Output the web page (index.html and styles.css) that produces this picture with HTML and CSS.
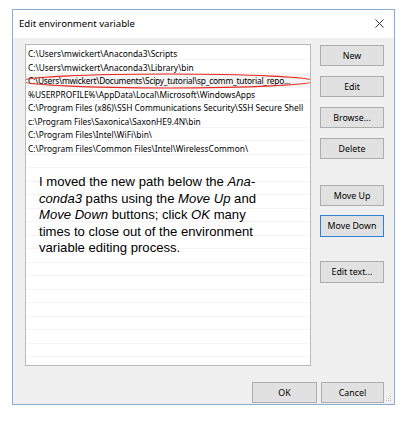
FILE: index.html
```html
<!DOCTYPE html>
<html>
<head>
<meta charset="utf-8">
<link rel="stylesheet" href="styles.css">
</head>
<body>
<div class="dialog">
  <div class="titlebar">
    <span class="title">Edit environment variable</span>
    <svg class="close" width="9" height="9" viewBox="0 0 9 9"><path d="M0.5 0.5 L8.5 8.5 M8.5 0.5 L0.5 8.5" stroke="#333" stroke-width="1" fill="none"/></svg>
  </div>
  <div class="client">
    <div class="content">
      <div class="listbox">
        <div class="row">C:\Users\mwickert\Anaconda3\Scripts</div>
        <div class="row">C:\Users\mwickert\Anaconda3\Library\bin</div>
        <div class="row sel">C:\Users\mwickert\Documents\Scipy_tutorial\sp_comm_tutorial_repo...</div>
        <div class="row">%USERPROFILE%\AppData\Local\Microsoft\WindowsApps</div>
        <div class="row">C:\Program Files (x86)\SSH Communications Security\SSH Secure Shell</div>
        <div class="row">c:\Program Files\Saxonica\SaxonHE9.4N\bin</div>
        <div class="row">C:\Program Files\Intel\WiFi\bin\</div>
        <div class="row">C:\Program Files\Common Files\Intel\WirelessCommon\</div>
        <svg class="ellipse" width="300" height="18" viewBox="0 0 300 18"><ellipse cx="149" cy="9" rx="146" ry="7" stroke="#e8281e" stroke-width="1.2" fill="none"/></svg>
        <p class="note">I moved the new path below the <i>Ana-<br>conda3</i> paths using the <i>Move Up</i> and<br><i>Move Down</i> buttons; click <i>OK</i> many<br>times to close out of the environment<br>variable editing process.</p>
      </div>
      <div class="buttons">
        <button class="btn">New</button>
        <button class="btn">Edit</button>
        <button class="btn">Browse...</button>
        <button class="btn">Delete</button>
        <button class="btn gap">Move Up</button>
        <button class="btn focus">Move Down</button>
        <button class="btn gap2">Edit text...</button>
      </div>
    </div>
    <div class="footer">
      <button class="btn wide">OK</button>
      <button class="btn wide">Cancel</button>
    </div>
    <svg class="grip" width="6" height="6" viewBox="0 0 6 6"><rect x="4" y="0" width="1" height="1" fill="#bbb"/><rect x="2" y="2" width="1" height="1" fill="#bbb"/><rect x="4" y="2" width="1" height="1" fill="#bbb"/><rect x="0" y="4" width="1" height="1" fill="#bbb"/><rect x="2" y="4" width="1" height="1" fill="#bbb"/><rect x="4" y="4" width="1" height="1" fill="#bbb"/></svg>
  </div>
</div>
</body>
</html>
```
FILE: styles.css
```css
html, body {
  margin: 0;
  padding: 0;
  background: #ffffff;
}
body {
  padding: 9px 0 0 12px;
  font-family: "Noto Sans", "Open Sans", sans-serif;
}
.dialog {
  width: 381px;
  height: 394px;
  border: 1px solid #8caad6;
  display: flex;
  flex-direction: column;
  background: #f0f0f0;
}
.titlebar {
  height: 28px;
  background: #ffffff;
  display: flex;
  align-items: center;
  justify-content: space-between;
  padding: 0 8px 0 6px;
}
.title {
  font-size: 9.6px;
  color: #000;
  margin-top: -2px;
}
.close {
  margin-top: -1px;
  margin-right: 2px;
}
.client {
  position: relative;
  flex: 1;
  display: flex;
  flex-direction: column;
}
.content {
  display: flex;
  padding: 6px 0 0 12px;
}
.listbox {
  position: relative;
  width: 284px;
  height: 318px;
  border: 1px solid #b9b9b9;
  background-color: #ffffff;
  background-image: repeating-linear-gradient(to bottom, transparent 0, transparent 12.5px, #f4f4f4 12.5px, #f4f4f4 13.5px);
  background-position: 0 2px;
  padding-top: 2px;
  box-sizing: content-box;
  overflow: hidden;
}
.row {
  height: 13.5px;
  line-height: 13.5px;
  font-size: 8.4px;
  padding-left: 2px;
  white-space: nowrap;
  overflow: hidden;
  color: #000;
}
.row.sel {
  background: #f4f4f4;
  letter-spacing: -0.24px;
}
.ellipse {
  position: absolute;
  left: -7px;
  top: 27px;
}
.note {
  position: absolute;
  left: 13px;
  top: 129px;
  margin: 0;
  font-family: "Liberation Sans", Arial, sans-serif;
  font-size: 13.1px;
  line-height: 16.5px;
  color: #000;
}
.buttons {
  display: flex;
  flex-direction: column;
  margin-left: 9px;
  padding-top: 1px;
}
.btn {
  width: 64px;
  height: 21px;
  margin: 0 0 10px 0;
  padding: 0;
  border: 1px solid #adadad;
  background: #e1e1e1;
  font-family: "Noto Sans", "Open Sans", sans-serif;
  font-size: 8.8px;
  color: #000;
}
.btn.gap {
  margin-top: 16px;
  margin-bottom: 9px;
}
.btn.focus {
  border-color: #2f7fd6;
  height: 22px;
}
.btn.gap2 {
  margin-top: 14px;
  height: 22px;
}
.footer {
  display: flex;
  justify-content: flex-end;
  gap: 4px;
  padding: 16px 10px 0 0;
}
.btn.wide {
  width: 65px;
  margin: 0;
}
.btn.wide + .btn.wide {
  width: 63px;
}
.grip {
  position: absolute;
  right: 2px;
  bottom: 2px;
}
```
